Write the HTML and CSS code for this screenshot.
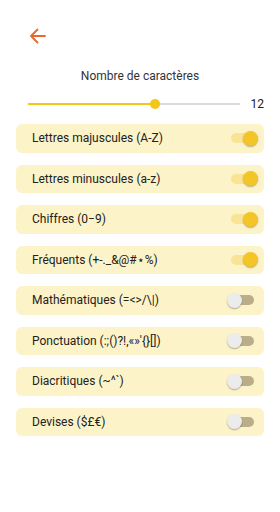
FILE: index.html
```html
<!DOCTYPE html>
<html lang="fr">
<head>
  <meta charset="UTF-8">
  <meta name="viewport" content="width=device-width, initial-scale=1.0">
  <title>Nombre de caractères</title>
  <link rel="stylesheet" href="styles.css">
</head>
<body>
  <header class="topbar">
    <a href="javascript:" class="back">
      <svg width="17" height="16" viewBox="0 0 17 16">
        <path d="M16 8H2M8.5 1.5L2 8l6.5 6.5" fill="none" stroke="#e9672b" stroke-width="1.8" stroke-linecap="round" stroke-linejoin="round"/>
      </svg>
    </a>
  </header>

  <h2 class="title">Nombre de caractères</h2>
  <div class="slider-row">
    <div class="slider">
      <div class="fill" style="width: 60%"></div>
      <div class="knob" style="left: 60%"></div>
    </div>
    <span class="value">12</span>
  </div>

  <ul class="options">
    <li class="opt"><span>Lettres majuscules (A-Z)</span><i class="switch on"></i></li>
    <li class="opt"><span>Lettres minuscules (a-z)</span><i class="switch on"></i></li>
    <li class="opt"><span>Chiffres (0−9)</span><i class="switch on"></i></li>
    <li class="opt"><span>Fréquents (+-._&amp;@#⋆%)</span><i class="switch on"></i></li>
    <li class="opt"><span>Mathématiques (=&lt;&gt;/\|)</span><i class="switch"></i></li>
    <li class="opt"><span>Ponctuation (:;()?!,«»'{}[])</span><i class="switch"></i></li>
    <li class="opt"><span>Diacritiques (~^`)</span><i class="switch"></i></li>
    <li class="opt"><span>Devises ($£€)</span><i class="switch"></i></li>
  </ul>
</body>
</html>
```

FILE: styles.css
```css
* {
  margin: 0;
  padding: 0;
  box-sizing: border-box;
}

body {
  background: #fff;
  font-family: Roboto, "Noto Sans", sans-serif;
  color: #222;
}

.topbar {
  height: 60px;
  padding: 28px 0 0 29px;
}

.back {
  display: block;
  width: 17px;
  height: 16px;
}

.back svg {
  display: block;
}

.title {
  font-size: 12px;
  font-weight: 400;
  line-height: 16px;
  text-align: center;
  color: #333;
  margin-top: 8px;
}

.slider-row {
  display: flex;
  align-items: center;
  height: 20px;
  margin-top: 10px;
  padding: 0 16px 0 28px;
}

.slider {
  position: relative;
  flex: 1;
  height: 2px;
  background: #dcdcdc;
}

.slider .fill {
  height: 100%;
  background: #f5c518;
}

.slider .knob {
  position: absolute;
  top: -4px;
  width: 10px;
  height: 10px;
  margin-left: -5px;
  border-radius: 50%;
  background: #f5c518;
}

.value {
  width: 24px;
  text-align: right;
  font-size: 12px;
  color: #222;
}

.options {
  list-style: none;
  display: flex;
  flex-direction: column;
  gap: 12px;
  padding: 10px 16px 0;
}

.opt {
  display: flex;
  align-items: center;
  justify-content: space-between;
  height: 28.5px;
  padding: 0 10px 0 16px;
  border-radius: 6px;
  background: #fdf3c8;
  font-size: 12px;
}

.switch {
  position: relative;
  width: 23px;
  height: 10px;
  border-radius: 5px;
  background: #b9ae89;
}

.switch::after {
  content: "";
  position: absolute;
  top: -2.5px;
  left: -4px;
  width: 15px;
  height: 15px;
  border-radius: 50%;
  background: #ececec;
  box-shadow: 0 1px 1.5px rgba(0, 0, 0, 0.3);
}

.switch.on {
  background: #f9e394;
}

.switch.on::after {
  left: 12px;
  background: #f4c526;
}
```
